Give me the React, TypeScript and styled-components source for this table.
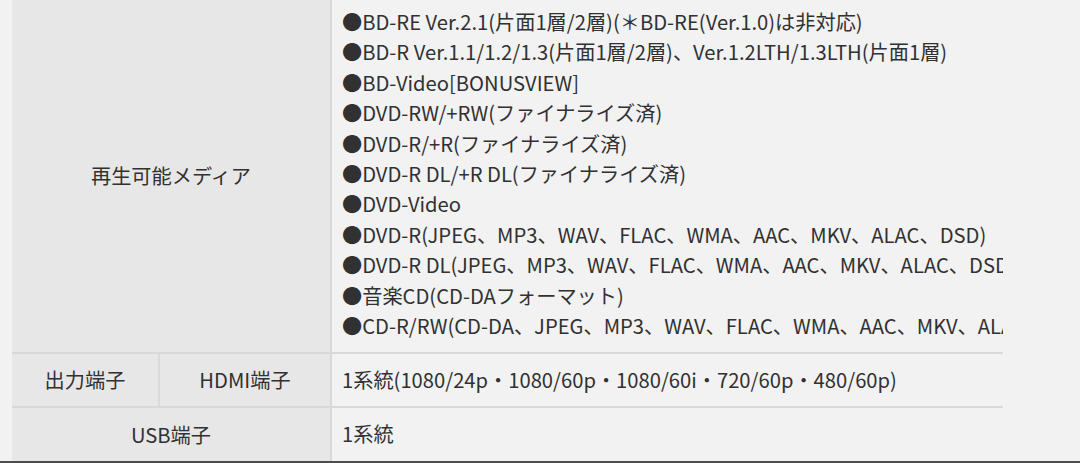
import * as React from "react";
import styled, { createGlobalStyle } from "styled-components";

const GlobalStyle = createGlobalStyle`
  html, body {
    margin: 0;
    padding: 0;
    background: #f2f2f2;
  }
  body {
    font-family: "Noto Sans CJK JP", "Noto Sans", sans-serif;
    color: #313131;
  }
`;

const Page = styled.div`
  width: 1080px;
  height: 463px;
  overflow: hidden;
  display: flex;
  flex-direction: column;
`;

const SpecGrid = styled.div`
  margin-left: 12px;
  width: 991px;
  display: grid;
  grid-template-columns: 146px 170px 671px;
  grid-template-rows: 352px 52px 53px;
  gap: 2px;
  background: #d9d9d9;
`;

const HeadCell = styled.div<{ $span?: number }>`
  grid-column: span ${(p) => p.$span ?? 1};
  background: #e7e7e7;
  display: flex;
  align-items: center;
  justify-content: center;
  font-size: 20.2px;
  line-height: 30px;
`;

const DataCell = styled.div<{ $list?: boolean }>`
  background: #f2f2f2;
  display: flex;
  flex-direction: column;
  justify-content: ${(p) => (p.$list ? "flex-start" : "center")};
  padding: ${(p) => (p.$list ? "7px 0 0 10px" : "0 0 0 10px")};
  font-size: 20.2px;
  line-height: 30.4px;
  white-space: nowrap;
  overflow: hidden;
`;

const Line = styled.div`
  white-space: nowrap;
`;

const BottomRule = styled.div`
  height: 2px;
  background: #4d4d4d;
`;

const media = [
  "●BD-RE Ver.2.1(片面1層/2層)(＊BD-RE(Ver.1.0)は非対応)",
  "●BD-R Ver.1.1/1.2/1.3(片面1層/2層)、Ver.1.2LTH/1.3LTH(片面1層)",
  "●BD-Video[BONUSVIEW]",
  "●DVD-RW/+RW(ファイナライズ済)",
  "●DVD-R/+R(ファイナライズ済)",
  "●DVD-R DL/+R DL(ファイナライズ済)",
  "●DVD-Video",
  "●DVD-R(JPEG、MP3、WAV、FLAC、WMA、AAC、MKV、ALAC、DSD)",
  "●DVD-R DL(JPEG、MP3、WAV、FLAC、WMA、AAC、MKV、ALAC、DSD)",
  "●音楽CD(CD-DAフォーマット)",
  "●CD-R/RW(CD-DA、JPEG、MP3、WAV、FLAC、WMA、AAC、MKV、ALAC、DSD)",
];

const App = () => {
  return (
    <Page>
      <GlobalStyle />
      <SpecGrid>
        <HeadCell $span={2}>再生可能メディア</HeadCell>
        <DataCell $list>
          {media.map((m) => (
            <Line key={m}>{m}</Line>
          ))}
        </DataCell>

        <HeadCell>出力端子</HeadCell>
        <HeadCell>HDMI端子</HeadCell>
        <DataCell>1系統(1080/24p・1080/60p・1080/60i・720/60p・480/60p)</DataCell>

        <HeadCell $span={2}>USB端子</HeadCell>
        <DataCell>1系統</DataCell>
      </SpecGrid>
      <BottomRule />
    </Page>
  );
};

export default App;
